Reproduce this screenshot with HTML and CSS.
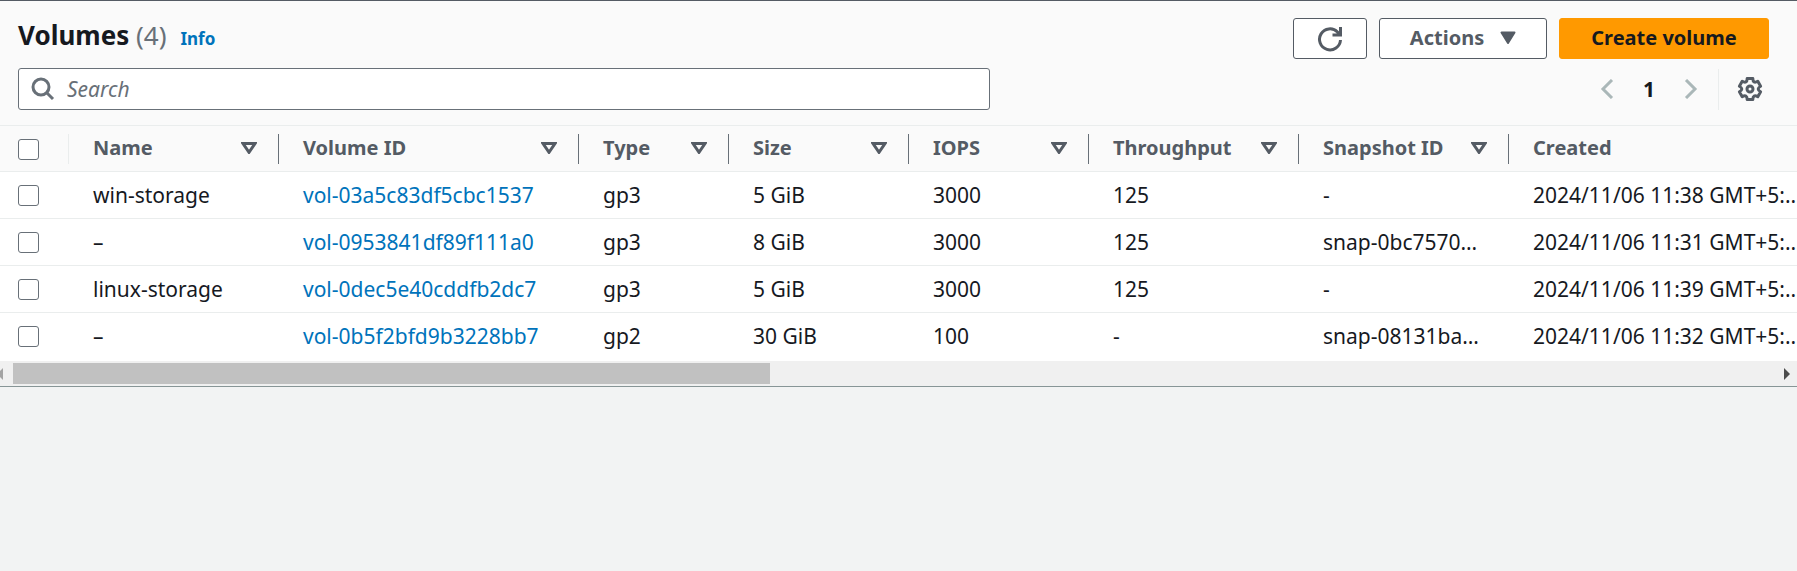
FILE: index.html
```html
<!DOCTYPE html>
<html lang="en">
<head>
<meta charset="utf-8">
<title>Volumes</title>
<link rel="stylesheet" href="styles.css">
</head>
<body>
<svg class="defs" aria-hidden="true">
  <symbol id="sort" viewBox="0 0 16 12"><path d="M2 1.5h12L8 10.300z"/></symbol>
</svg>
<main class="panel">
  <header class="top">
    <div class="bar">
      <div class="heading">
        <h1>Volumes <span class="count">(4)</span></h1>
        <a class="info" href="#">Info</a>
      </div>
      <div class="actions">
        <button class="btn refresh" aria-label="Refresh"><svg viewBox="0 0 26 26" width="26" height="26"><path d="M23.500 14A10.500 10.500 0 1 1 20.500 6L23 9M23.500 1v8h-8"/></svg></button>
        <button class="btn menu">Actions <svg viewBox="0 0 16 14" width="16" height="14"><path d="M1.500 1.500h13L8 12z"/></svg></button>
        <button class="btn primary">Create volume</button>
      </div>
    </div>
    <div class="tools">
      <label class="search">
        <svg viewBox="0 0 24 24" width="24" height="24"><circle cx="10" cy="10" r="8"/><path d="M15.500 15.500l6.500 6.500"/></svg>
        <input type="text" placeholder="Search" aria-label="Search volumes">
      </label>
      <div class="pager">
        <button class="icon" aria-label="Previous page"><svg viewBox="0 0 14 20" width="14" height="20"><path d="M12 1L3 10l9 9"/></svg></button>
        <button class="icon page">1</button>
        <button class="icon" aria-label="Next page"><svg viewBox="0 0 14 20" width="14" height="20"><path d="M2 1l9 9-9 9"/></svg></button>
        <button class="icon gear" aria-label="Preferences"><svg viewBox="0 0 26 26" width="26" height="26"><path d="M10.200 2.400H15.800Q15.900 8 20.800 5.200L23.600 10.200Q18.800 13 23.600 15.800L20.800 20.800Q15.900 18 15.800 23.600H10.200Q10.100 18 5.200 20.800L2.400 15.800Q7.200 13 2.400 10.200L5.200 5.200Q10.100 8 10.200 2.400z"/><circle cx="13" cy="13" r="3"/></svg></button>
      </div>
    </div>
  </header>
  <div class="scroll">
    <table>
      <colgroup><col class="c-check"><col class="c-m"><col class="c-l"><col class="c-xs"><col class="c-s"><col class="c-s"><col class="c-m"><col class="c-m"><col class="c-xl"></colgroup>
      <thead>
        <tr>
          <th><div class="cell first"><input type="checkbox" aria-label="Select all"></div></th>
          <th><div class="cell">Name <svg><use href="#sort"/></svg></div></th>
          <th><div class="cell">Volume ID <svg><use href="#sort"/></svg></div></th>
          <th><div class="cell">Type <svg><use href="#sort"/></svg></div></th>
          <th><div class="cell">Size <svg><use href="#sort"/></svg></div></th>
          <th><div class="cell">IOPS <svg><use href="#sort"/></svg></div></th>
          <th><div class="cell">Throughput <svg><use href="#sort"/></svg></div></th>
          <th><div class="cell">Snapshot ID <svg><use href="#sort"/></svg></div></th>
          <th><div class="cell">Created</div></th>
        </tr>
      </thead>
      <tbody>
        <tr><td><input type="checkbox" aria-label="Select win-storage"></td><td>win-storage</td><td><a href="#">vol-03a5c83df5cbc1537</a></td><td>gp3</td><td>5 GiB</td><td>3000</td><td>125</td><td>-</td><td>2024/11/06 11:38 GMT+5:…</td></tr>
        <tr><td><input type="checkbox" aria-label="Select vol-0953841df89f111a0"></td><td>–</td><td><a href="#">vol-0953841df89f111a0</a></td><td>gp3</td><td>8 GiB</td><td>3000</td><td>125</td><td>snap-0bc7570…</td><td>2024/11/06 11:31 GMT+5:…</td></tr>
        <tr><td><input type="checkbox" aria-label="Select linux-storage"></td><td>linux-storage</td><td><a href="#">vol-0dec5e40cddfb2dc7</a></td><td>gp3</td><td>5 GiB</td><td>3000</td><td>125</td><td>-</td><td>2024/11/06 11:39 GMT+5:…</td></tr>
        <tr><td><input type="checkbox" aria-label="Select vol-0b5f2bfd9b3228bb7"></td><td>–</td><td><a href="#">vol-0b5f2bfd9b3228bb7</a></td><td>gp2</td><td>30 GiB</td><td>100</td><td>-</td><td>snap-08131ba…</td><td>2024/11/06 11:32 GMT+5:…</td></tr>
      </tbody>
    </table>
  </div>
  <div class="track">
    <svg class="left" viewBox="0 0 3 12" width="3" height="12"><path d="M0 3L3 0v12L0 9z"/></svg>
    <div class="lane"><div class="thumb"></div></div>
    <svg class="right" viewBox="0 0 6 12" width="6" height="12"><path d="M0 0l6 6-6 6z"/></svg>
  </div>
</main>
</body>
</html>
```
FILE: styles.css
```css
* { box-sizing: border-box; }

body {
  margin: 0;
  background: #f2f3f3;
  color: #16191f;
  font: 21px/30px "Noto Sans", sans-serif;
}

button, input { font: inherit; color: inherit; }
a { color: #0073bb; text-decoration: none; }
svg { flex: none; fill: none; stroke: currentColor; stroke-width: 3; }
.defs { display: none; }

.panel {
  border-top: 1px solid #545b64;
  border-bottom: 1px solid #879596;
  box-shadow: 0 1px 1px rgba(0, 28, 36, .3);
  overflow: hidden;
  background: #fff;
}

.top {
  background: #fafafa;
  border-bottom: 1px solid #eaeded;
  padding: 17px 28px 15px 18px;
}

.bar, .tools { display: flex; justify-content: space-between; }
.tools { margin-top: 9px; }
.heading { display: flex; align-items: baseline; gap: 14px; }
h1 { margin: 0; font-size: 26px; line-height: 34px; font-weight: 700; }
.count { color: #687078; font-weight: 400; }
.info { font-size: 17px; font-weight: 700; }

.actions { display: flex; gap: 12px; }
.btn {
  display: flex;
  align-items: center;
  justify-content: center;
  height: 41px;
  padding: 0 0 2px;
  border: 1px solid #545b64;
  border-radius: 3px;
  background: #fff;
  color: #545b64;
  font-size: 20px;
  font-weight: 700;
}
.refresh { width: 74px; padding: 0; }
.menu { gap: 16px; width: 168px; }
.menu svg { fill: currentColor; stroke-width: 2; stroke-linejoin: round; }
.primary { width: 210px; background: #f90; border-color: #f90; color: #16191f; }

.search {
  display: flex;
  align-items: center;
  gap: 12px;
  flex: 0 1 972px;
  height: 42px;
  padding: 0 12px;
  border: 1px solid #687078;
  border-radius: 3px;
  background: #fff;
  color: #687078;
}
.search input { flex: 1; border: 0; padding: 0; background: none; outline: 0; }
.search input::placeholder { color: #687078; font-style: italic; opacity: 1; }

.pager { display: flex; align-items: center; }
.icon {
  display: flex;
  justify-content: center;
  align-items: center;
  width: 42px;
  height: 41px;
  padding: 0;
  border: 0;
  background: none;
  color: #aab7b8;
}
.icon.page { color: #16191f; font-weight: 700; }
.icon.gear { width: 51px; margin-left: 6px; padding-left: 12px; border-left: 1px solid #eaeded; color: #545b64; }
.gear svg { stroke-linejoin: round; }

.scroll { overflow: hidden; }
table { width: 1834px; table-layout: fixed; border-collapse: separate; border-spacing: 0; }
.c-check { width: 69px; }
.c-xs { width: 150px; }
.c-s { width: 180px; }
.c-m { width: 210px; }
.c-l { width: 300px; }
.c-xl { width: 325px; }

th { padding: 8px 0 7px; background: #fafafa; border-bottom: 1px solid #eaeded; }
.cell {
  display: flex;
  align-items: center;
  justify-content: space-between;
  height: 30px;
  padding: 0 21px 2px 24px;
  border-right: 1px solid #687078;
  color: #545b64;
  font-size: 20px;
  white-space: nowrap;
}
.cell.first { padding: 0 0 0 18px; border-color: #eaeded; }
.cell svg { width: 16px; height: 12px; }

td {
  height: 47px;
  padding: 8px 0 8px 24px;
  border-bottom: 1px solid #eaeded;
  white-space: nowrap;
}
td:first-child { padding-left: 18px; }
tr:last-child td { border-bottom-color: #fff; }

input[type="checkbox"] {
  appearance: none;
  display: block;
  width: 21px;
  height: 21px;
  margin: 0;
  border: 1px solid #687078;
  border-radius: 3px;
  background: #fff;
}

.track { display: flex; align-items: center; height: 25px; margin-top: 1px; background: #f0f0f0; color: #4c4c4c; }
.track svg { fill: currentColor; stroke: none; }
.track .left { color: #a3a3a3; }
.track .right { margin-right: 7px; }
.lane { flex: 1; margin: 0 10px; }
.thumb { width: 43%; height: 21px; background: #c1c1c1; }
```
